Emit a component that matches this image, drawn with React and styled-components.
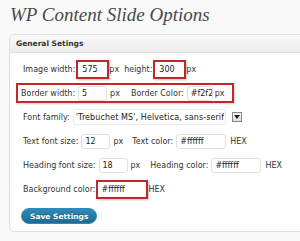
import React from "react";
import styled, { createGlobalStyle } from "styled-components";

const Global = createGlobalStyle`
  html, body { margin: 0; padding: 0; background: #f9f9f9; }
  body { font-family: "DejaVu Sans", Verdana, sans-serif; }
`;

const Page = styled.div`
  width: 300px;
  height: 241px;
  overflow: hidden;
  padding-left: 9px;
  box-sizing: border-box;
`;

const Title = styled.h2`
  margin: 0;
  padding: 4px 0 0 1px;
  height: 34px;
  box-sizing: border-box;
  font-family: "Liberation Serif", Georgia, serif;
  font-style: italic;
  font-weight: normal;
  font-size: 19px;
  color: #4a4a4a;
`;

const Panel = styled.div`
  width: 320px;
  border: 1px solid #dfdfdf;
  border-radius: 5px;
  background: #fff;
  overflow: hidden;
`;

const PanelHeader = styled.div`
  height: 17px;
  display: flex;
  align-items: center;
  padding-left: 6px;
  background: linear-gradient(#f9f9f9, #ececec);
  border-bottom: 1px solid #dfdfdf;
  font-size: 7.5px;
  font-weight: bold;
  color: #333;
`;

const Body = styled.div`
  padding: 6px 0 7px 6px;
  display: flex;
  flex-direction: column;
  gap: 4px;
`;

const Row = styled.div`
  display: flex;
  align-items: center;
  height: 20px;
  padding-left: ${(p) => (p.$boxed ? 3 : 5)}px;
  width: ${(p) => (p.$boxed ? "218px" : "auto")};
  box-sizing: border-box;
  border: ${(p) => (p.$boxed ? "2px solid #c1272d" : "2px solid transparent")};
  box-shadow: ${(p) => (p.$boxed ? "1px 1px 2px rgba(0,0,0,0.2)" : "none")};
  font-size: 8px;
  color: #333;
  white-space: nowrap;
`;

const Label = styled.span`
  margin-right: ${(p) => p.$mr ?? 3}px;
  margin-left: ${(p) => p.$ml ?? 0}px;
`;

const Input = styled.span`
  display: inline-flex;
  align-items: center;
  width: ${(p) => p.$w}px;
  height: 15px;
  padding-left: 3px;
  box-sizing: border-box;
  background: #fff;
  border: 1px solid #dfdfdf;
  border-radius: 3px;
  font-size: 8px;
  color: #222;
  overflow: hidden;
`;

const Highlight = styled.span`
  display: inline-flex;
  border: 2px solid #c1272d;
  box-shadow: 1px 1px 2px rgba(0,0,0,0.25);
  & > span { border-color: transparent; }
`;

const Select = styled.span`
  display: inline-flex;
  align-items: center;
  gap: 6px;
  font-size: 8px;
  color: #222;
`;

const SelectField = styled.span`
  display: inline-flex;
  align-items: center;
  height: 14px;
  padding: 0 1px 0 2px;
  border: 1px solid #ececec;
  border-radius: 2px;
  background: #fff;
  letter-spacing: 0.1px;
`;

const Arrow = styled.span`
  display: inline-flex;
  align-items: center;
  justify-content: center;
  width: 10px;
  height: 10px;
  border: 1px solid #888;
  background: linear-gradient(#fafafa, #dcdcdc);
  box-sizing: border-box;
`;

const Button = styled.button`
  margin: 5px 0 0 5px;
  align-self: flex-start;
  height: 16px;
  padding: 0 8px;
  border: 1px solid #298cba;
  border-radius: 9px;
  background: linear-gradient(#2e8ab8, #1f6a90);
  color: #fff;
  font-family: "DejaVu Sans", Verdana, sans-serif;
  font-weight: bold;
  font-size: 7.5px;
  text-shadow: 0 -1px 0 rgba(0,0,0,0.3);
`;

export default function App() {
  return (
    <Page>
      <Global />
      <Title>WP Content Slide Options</Title>
      <Panel>
        <PanelHeader>General Setings</PanelHeader>
        <Body>
          <Row>
            <Label $mr={1}>Image width:</Label>
            <Highlight>
              <Input $w={29}>575</Input>
            </Highlight>
            <Label $mr={5}>px</Label>
            <Label $mr={1}>height:</Label>
            <Highlight>
              <Input $w={29}>300</Input>
            </Highlight>
            <Label>px</Label>
          </Row>
          <Row $boxed>
            <Label>Border width:</Label>
            <Input $w={29}>5</Input>
            <Label $ml={3} $mr={11}>px</Label>
            <Label>Border Color:</Label>
            <Input $w={26}>#f2f2f</Input>
            <Label $ml={2}>px</Label>
          </Row>
          <Row>
            <Label $mr={3}>Font family:</Label>
            <Select>
              <SelectField>'Trebuchet MS', Helvetica, sans-serif</SelectField>
              <Arrow>
                <svg width="6" height="4" viewBox="0 0 6 4">
                  <path d="M0 0 L6 0 L3 4 Z" fill="#222" />
                </svg>
              </Arrow>
            </Select>
          </Row>
          <Row>
            <Label>Text font size:</Label>
            <Input $w={29}>12</Input>
            <Label $ml={3} $mr={9}>px</Label>
            <Label>Text color:</Label>
            <Input $w={50}>#ffffff</Input>
            <Label $ml={4}>HEX</Label>
          </Row>
          <Row>
            <Label>Heading font size:</Label>
            <Input $w={29}>18</Input>
            <Label $ml={3} $mr={10}>px</Label>
            <Label>Heading color:</Label>
            <Input $w={50}>#ffffff</Input>
            <Label $ml={4}>HEX</Label>
          </Row>
          <Row>
            <Label $mr={0}>Background color:</Label>
            <Highlight>
              <Input $w={48}>#ffffff</Input>
            </Highlight>
            <Label $ml={1}>HEX</Label>
          </Row>
          <Button>Save Settings</Button>
        </Body>
      </Panel>
    </Page>
  );
}
